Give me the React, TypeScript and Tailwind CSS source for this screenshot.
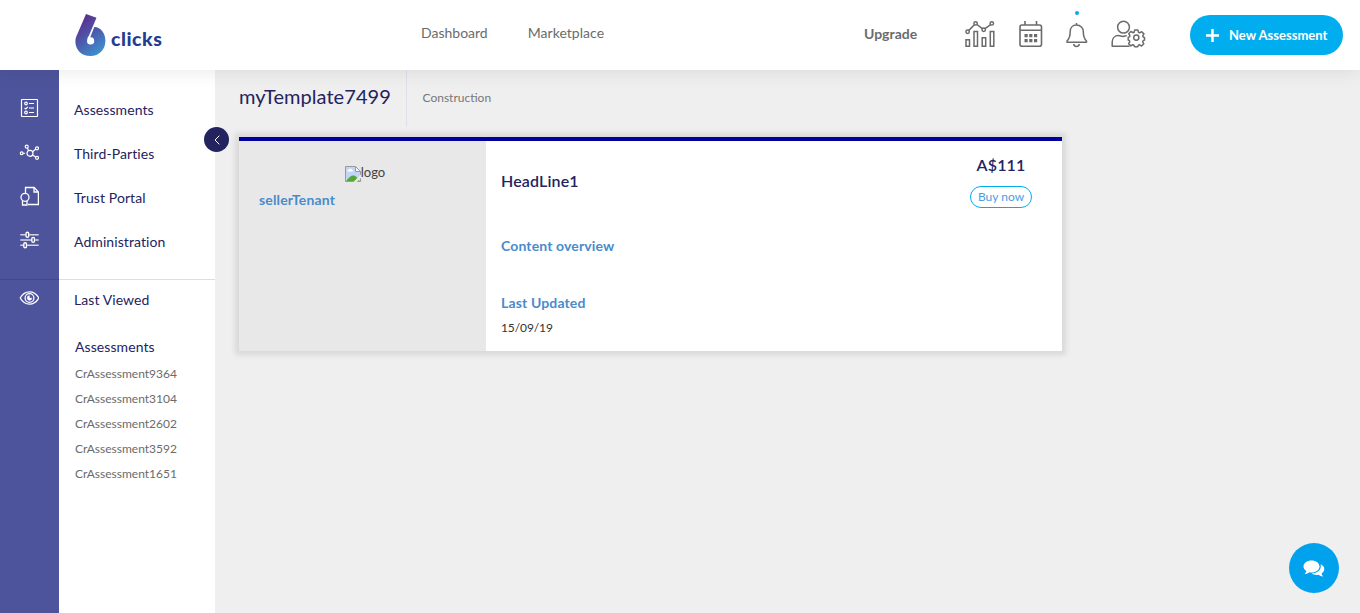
import React from "react";

const navItems = ["Assessments", "Third-Parties", "Trust Portal", "Administration"];
const recent = ["CrAssessment9364", "CrAssessment3104", "CrAssessment2602", "CrAssessment3592", "CrAssessment1651"];

function Logo() {
  return (
    <svg width="31" height="44" viewBox="0 0 31 44">
      <defs>
        <linearGradient id="six" x1="0.2" y1="0" x2="0.75" y2="1">
          <stop offset="0" stopColor="#5e2a8a" />
          <stop offset="0.4" stopColor="#504da3" />
          <stop offset="1" stopColor="#3d94d0" />
        </linearGradient>
      </defs>
      <path
        fill="url(#six)"
        d="M11 1 L21.500 4.800 L14 22.500 Q12 24.800 12 28 A3.600 3.600 0 1 0 15.200 24.400 L19.300 14 C25.500 14 30.400 20 30.400 27.500 C30.400 37 24 43 15.500 43 C6.500 43 0.400 37 0.400 28.500 C0.400 25.500 1.200 23.500 2.200 21.500 Z"
      />
    </svg>
  );
}

function ChartIcon() {
  return (
    <svg width="30" height="28" viewBox="0 0 30 28" fill="none" stroke="#6b6b6b" strokeWidth="1.5">
      <path d="M1 19.700h3.500v6.600H1zM9 11.500h3.500v14.800H9zM17.200 17.700h3.500v8.600h-3.500zM25.300 11.500h3.500v14.800h-3.500z" />
      <circle cx="2.600" cy="11.700" r="1.700" />
      <circle cx="10.600" cy="3.400" r="1.700" />
      <circle cx="18.700" cy="9.800" r="1.700" />
      <circle cx="26.800" cy="3.400" r="1.700" />
      <path d="M3.800 10.400 9.400 4.700M12 4.500l5.300 4.200M20 8.600l5.600-4" />
    </svg>
  );
}

function CalendarIcon() {
  return (
    <svg width="24" height="28" viewBox="0 0 24 28" fill="none" stroke="#6b6b6b" strokeWidth="1.600">
      <rect x="1" y="5" width="21.500" height="21.300" rx="2" />
      <path d="M1 10.200h21.500M6 1v4M17.500 1v4" />
      <g fill="#6b6b6b" stroke="none">
        <path d="M5.500 14h3.200v3.200h-3.200zM10.200 14h3.200v3.200h-3.200zM15 14h3.200v3.200h-3.200zM5.500 19h3.200v3.200h-3.200zM10.200 19h3.200v3.200h-3.200zM15 19h3.200v3.200h-3.200z" />
      </g>
    </svg>
  );
}

function BellIcon() {
  return (
    <svg width="22" height="26" viewBox="0 0 22 26" fill="none" stroke="#6b6b6b" strokeWidth="1.500" strokeLinejoin="round">
      <path d="M10.500 1v2M10.500 3C6.500 3 4.200 6 4.200 9.500c0 5-.5 7-3.200 9.500v1.200h19.500V19c-2.700-2.500-3.200-4.500-3.200-9.500C17.300 6 14.500 3 10.500 3Z" />
      <path d="M7.800 22a2.700 2.400 0 0 0 5.400 0" />
    </svg>
  );
}

function UserGearIcon() {
  return (
    <svg width="35" height="28" viewBox="0 0 35 28" fill="none" stroke="#6b6b6b" strokeWidth="1.500" strokeLinejoin="round" strokeLinecap="round">
      <circle cx="12.500" cy="7.200" r="5.900" />
      <path d="M18 26.200H1.200V22c0-3.700 2.500-6.400 6.300-6.400 1.700 0 2.500.8 4.500.8 1.500 0 2-.5 3.200-.7" />
      <g transform="translate(-.5 -.4)">
        <circle cx="25.800" cy="18" r="2.600" />
        <path d="m24.200 10.500 3.200 0 .6 2.200 1.200.5 2-1.100 2.200 2.200-1.100 2 .5 1.200 1.200.4v2.600l-1.300.5-.5 1.200 1.100 2-2.200 2.200-2-1.200-1.200.5-.6 1.400h-3.200l-.6-1.500-1.200-.5-2 1.200-2.200-2.200 1.200-2-.5-1.200-1.100-.4v-2.800l1.200-.4.500-1.200-1.200-2 2.200-2.200 2 1.200 1.200-.5z" />
      </g>
    </svg>
  );
}

const sideIcon = { width: 20, height: 20, viewBox: "0 0 20 20", fill: "none", stroke: "#fff" };

function ChecklistIcon() {
  return (
    <svg {...sideIcon} strokeWidth="1.2">
      <rect x="2.500" y="1.500" width="16" height="17" rx="0.500" />
      <circle cx="7" cy="5.500" r="1.300" />
      <circle cx="7" cy="14.500" r="1.300" />
      <path d="m5.500 10 1.300 1 2-2.200M10 5.500h5M10 14.500h5" />
      <path d="M10 10h5" strokeWidth="1.800" opacity=".6" />
    </svg>
  );
}

function NetworkIcon() {
  return (
    <svg {...sideIcon} strokeWidth="1.200">
      <circle cx="11" cy="11.300" r="3" />
      <circle cx="2.700" cy="11.300" r="1.400" />
      <circle cx="7.700" cy="4.700" r="1.500" />
      <circle cx="18" cy="6.300" r="1.500" />
      <circle cx="18" cy="15.800" r="1.500" />
      <path d="M4.300 11.300h1.500M8.500 6l1 2.700M13.600 9.800 16.800 7M13.500 13l3.200 2" />
    </svg>
  );
}

function CertificateIcon() {
  return (
    <svg {...sideIcon} strokeWidth="1.300">
      <path d="M6.500 7V1.500h8.700l4.200 4.500v12.500H9M15 1.500V6h4.300" />
      <circle cx="6" cy="11.300" r="4" />
      <path d="M3.500 14.800V19H8v-4.200" />
    </svg>
  );
}

function SlidersIcon() {
  return (
    <svg {...sideIcon} strokeWidth="1.400">
      <path d="M1.300 4.700h5M10.300 4.700h9.400M1.300 9.900h11M16.300 9.900h3.400M1.300 15.200h3M8.300 15.200h11.400" strokeWidth="1.500" opacity=".75" />
      <rect x="7" y="2.200" width="2.700" height="5" rx="1.300" />
      <rect x="12.800" y="7.400" width="2.700" height="5" rx="1.300" />
      <rect x="4.800" y="12.700" width="2.700" height="5" rx="1.300" />
    </svg>
  );
}

function EyeIcon() {
  return (
    <svg {...sideIcon} strokeWidth="1.300">
      <path d="M1.200 10C3.500 6 6.500 3.900 10.500 3.900S17.500 6 19.800 10C17.500 14 14.500 16.100 10.500 16.100S3.500 14 1.200 10Z" />
      <circle cx="10.500" cy="10" r="4.400" />
      <path d="M10.500 7.600A2.400 2.400 0 1 0 12.900 10H10.500z" fill="#fff" strokeWidth=".3" />
    </svg>
  );
}

function BrokenImage() {
  return (
    <svg width="16" height="16" viewBox="0 0 16 16" className="mt-0.5 shrink-0">
      <path d="M.5.500h10l5 5v10H.5z" fill="#c2d5f6" />
      <path d="M2.500 5.500a1.500 1.500 0 0 1 1.500-2 1.800 1.800 0 0 1 3.200.5 1.300 1.300 0 0 1 1 1.500z" fill="#fff" />
      <path d="M1 15.200C4 11 6.500 9 9 9.500c2.200.5 4 3 5.500 5.700z" fill="#54a838" />
      <path d="M.5.500h10l5 5v10H.5z" fill="none" stroke="#9a9a9a" />
      <path d="M10.500.500v5h5z" fill="#fff" stroke="#9a9a9a" />
      <path d="M16 8.200 8.500 16h3.200L16 12z" fill="#e8e8e8" />
    </svg>
  );
}

function ChatIcon() {
  return (
    <svg width="22" height="18" viewBox="0 0 22 18" fill="#fff" className="mt-0.5">
      <path d="M8.500.500c4.500 0 8 2.600 8 6s-3.500 6-8 6c-.8 0-1.600-.1-2.300-.3C5 13.300 3.500 14 1.600 14c1-.9 1.600-1.800 1.700-3C1.500 9.900.5 8.300.5 6.500c0-3.400 3.500-6 8-6Z" />
      <path d="M17.600 4.200C19.900 5.300 21.300 7 21.300 9c0 1.800-1 3.300-2.700 4.400.1 1.200.7 2.100 1.700 3-1.900 0-3.500-.7-4.600-1.700-2.500.6-5.400.1-7.200-1.200 5-.1 9.300-3 9.300-7 0-.8 0-1.500-.2-2.300Z" />
    </svg>
  );
}

const icons = [ChecklistIcon, NetworkIcon, CertificateIcon, SlidersIcon];

export default function App() {
  return (
    <div className="flex h-[613px] w-[1360px] flex-col overflow-hidden bg-[#efefef] font-['Lato',sans-serif] text-[#23235f]">
      <header className="relative z-10 flex h-[70px] shrink-0 items-center bg-white text-[#6b6b6b] shadow-[0_0_20px_rgba(0,0,0,0.1)]">
        <a className="flex w-[346px] items-center pl-[75px]">
          <Logo />
          <span className="mt-[7px] ml-[5px] text-[19.500px] leading-6 font-black tracking-[0.55px] text-[#253c90]">clicks</span>
        </a>
        <nav className="flex w-[518px] gap-10 pl-[75px] text-sm leading-5">
          <a className="-mt-1">Dashboard</a>
          <a className="-mt-1 tracking-[0.04px]">Marketplace</a>
        </nav>
        <a className="-mt-0.5 w-[101px] text-sm font-bold">Upgrade</a>
        <div className="-mt-0.5 flex items-center">
          <ChartIcon />
          <span className="ml-[24px]"><CalendarIcon /></span>
          <span className="relative mt-0.5 ml-[23px]">
            <BellIcon />
            <i className="absolute -top-[11px] left-[9px] size-1 rounded-full bg-[#00aeef]" />
          </span>
          <span className="ml-[23px]"><UserGearIcon /></span>
        </div>
        <button className="mr-[17px] ml-auto flex h-10 w-[153px] items-center rounded-full bg-[#00aeef] pl-4 text-[13px] font-bold text-white">
          <svg width="13" height="13" viewBox="0 0 13 13" stroke="#fff" strokeWidth="2.500"><path d="M6.500 0v13M0 6.500h13" /></svg>
          <span className="mt-0.5 ml-[10px]">New Assessment</span>
        </button>
      </header>

      <div className="flex flex-1">
        <aside className="relative flex shrink-0">
          <div className="flex w-[59px] flex-col bg-[#4e549b]">
            <div className="flex h-[210px] flex-col border-b border-[#43488a] pt-4">
              {icons.map((Icon, i) => (
                <span key={i} className="flex h-11 items-center pl-[19px]"><Icon /></span>
              ))}
            </div>
            <span className="flex h-9 items-center pl-[19px]"><EyeIcon /></span>
          </div>
          <div className="w-[156px] bg-white text-sm tracking-[0.08px] [font-variant-ligatures:common-ligatures]">
            <div className="h-[210px] border-b border-[#dedede] pt-[18px] pl-[15px]">
              {navItems.map((n) => <a key={n} className="flex h-11 items-center">{n}</a>)}
            </div>
            <div className="flex h-10 items-center pl-[15px]">Last Viewed</div>
            <div className="mt-[17px] flex h-5 items-center pl-4">Assessments</div>
            <ul className="mt-1 pl-4 text-xs tracking-normal text-[#6b6b6b]">
              {recent.map((r) => <li key={r} className="flex h-[25px] items-center">{r}</li>)}
            </ul>
          </div>
          <button className="absolute top-[57px] left-[204px] flex size-[25px] items-center justify-center rounded-full bg-[#23235f]">
            <svg width="6" height="10" viewBox="0 0 6 10" fill="none" stroke="#fff"><path d="M5.300.700 1 5l4.300 4.300" /></svg>
          </button>
        </aside>

        <main className="flex-1 pl-6">
          <div className="flex h-[57px] items-center">
            <h1 className="flex h-full w-[168px] items-center border-r border-[#dedfea] text-xl tracking-[0.06px]">
              <span className="-mt-1.5">myTemplate7499</span>
            </h1>
            <span className="-mt-0.5 pl-[15.500px] text-xs text-[#777]">Construction</span>
          </div>
          <section className="mt-[10px] flex h-[214px] w-[823px] border-t-4 border-[#0000a0] bg-white shadow-[0_0_5px_4px_#d9d9d9]">
            <div className="w-[247px] bg-[#e8e8e8] pt-6 pl-5">
              <div className="flex h-4 w-[212px] items-center justify-center text-[13px] text-[#444]">
                <BrokenImage />logo
              </div>
              <div className="mt-[9px] text-sm leading-5 font-bold tracking-[0.15px] text-[#4a8bcb]">sellerTenant</div>
            </div>
            <div className="flex-1 pt-[30px] pl-[15px]">
              <h2 className="text-base leading-5 font-semibold tracking-[0.15px]">HeadLine1</h2>
              <h3 className="mt-[45px] text-sm leading-5 font-bold tracking-[0.13px] text-[#4a8bcb]">Content overview</h3>
              <h3 className="mt-[37px] text-sm leading-5 font-bold tracking-[0.15px] text-[#4a8bcb]">Last Updated</h3>
              <p className="mt-[5px] text-xs leading-5 tracking-[-0.1px] text-[#333]">15/09/19</p>
            </div>
            <div className="mr-[30px] flex flex-col items-center pt-[14px]">
              <span className="text-base leading-5 font-semibold tracking-[0.15px]">A$111</span>
              <button className="mt-[11px] flex h-[22px] w-[62px] items-center justify-center rounded-full border border-[#00aeef] text-xs text-[#4a9ee0]">Buy now</button>
            </div>
          </section>
        </main>
      </div>

      <button className="fixed right-[21px] bottom-5 flex size-[50px] items-center justify-center rounded-full bg-[#00a2ed]">
        <ChatIcon />
      </button>
    </div>
  );
}
